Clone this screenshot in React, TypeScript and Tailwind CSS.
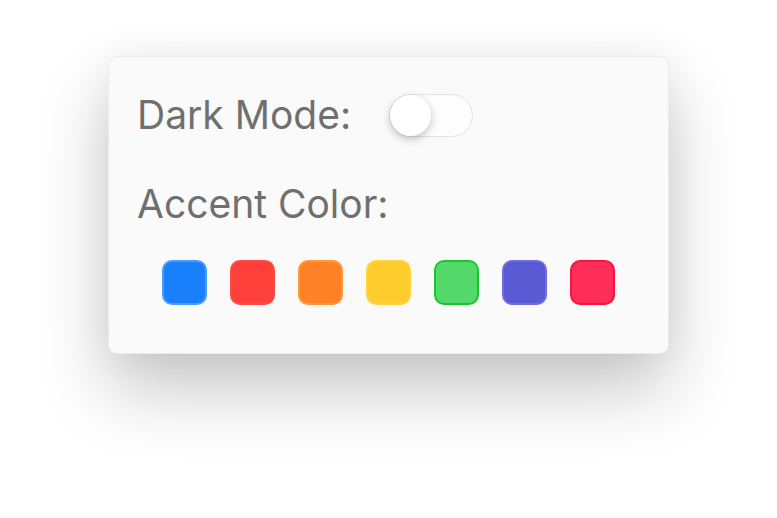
import { useState } from "react";

const swatches = [
  { bg: "bg-[#1a7ffb]", border: "border-[#4b9dfd]" },
  { bg: "bg-[#ff3f3a]", border: "border-[#ff4a44]" },
  { bg: "bg-[#ff8226]", border: "border-[#ff9838]" },
  { bg: "bg-[#ffcc2e]", border: "border-[#ffd23e]" },
  { bg: "bg-[#53d86a]", border: "border-[#1ec42e]" },
  { bg: "bg-[#5a5bd4]", border: "border-[#6d6fe0]" },
  { bg: "bg-[#ff2d5a]", border: "border-[#ff103c]" },
];

export default function App() {
  const [dark, setDark] = useState(false);
  const [accent, setAccent] = useState(0);

  return (
    <div className="min-h-[518px] w-full bg-white pl-[108px] pt-[56px] font-['Inter','Liberation_Sans',Arial,sans-serif]">
      <div className="box-border flex h-[298px] w-[561px] flex-col rounded-[9px] border border-[#ebebeb] bg-[#fafafa] pl-[28px] pt-[34px] shadow-[0_36px_70px_rgba(0,0,0,0.22),0_0_40px_rgba(0,0,0,0.05)]">
        {/* Dark mode row */}
        <div className="flex h-[48px] items-center">
          <span className="w-[252px] text-[39px] leading-[48px] text-[#6f6f6f]">Dark Mode:</span>
          <button
            onClick={() => setDark(!dark)}
            className={`flex h-[43px] w-[84px] items-center rounded-full border-[1.5px] border-[#e2e2e2] p-0 ${
              dark ? "justify-end bg-[#34c759]" : "justify-start bg-[#fdfdfd]"
            }`}
          >
            <span className="block h-[41px] w-[41px] rounded-full bg-white shadow-[0_3px_8px_rgba(0,0,0,0.24)]" />
          </button>
        </div>

        {/* Accent color */}
        <div className="mt-[41px] text-[39px] leading-[48px] text-[#6f6f6f]">Accent Color:</div>

        <div className="mt-[32px] flex justify-center gap-[23px] pr-[28px]">
          {swatches.map((s, i) => (
            <button
              key={i}
              onClick={() => setAccent(i)}
              className={`h-[45px] w-[45px] rounded-[10px] border-2 ${s.bg} ${s.border} ${
                accent === i ? "" : ""
              }`}
            />
          ))}
        </div>
      </div>
    </div>
  );
}
